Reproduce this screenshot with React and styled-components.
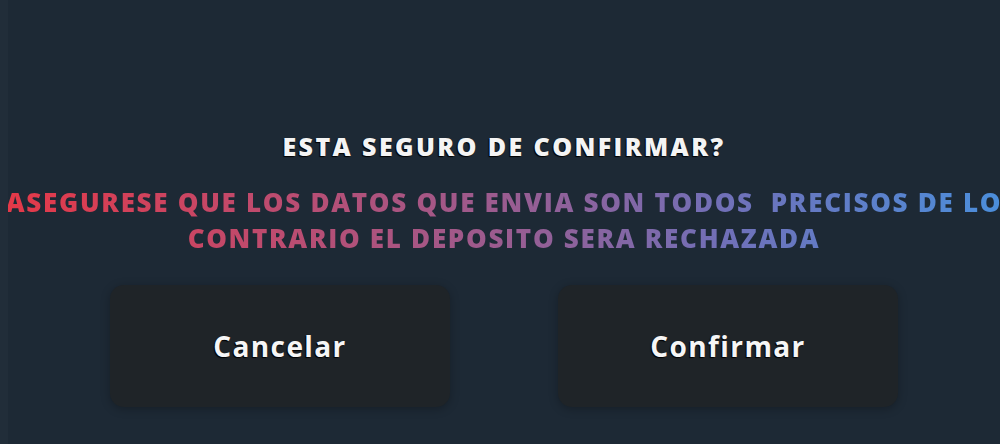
import React from 'react';
import styled, { createGlobalStyle } from 'styled-components';

const GlobalStyle = createGlobalStyle`
  html, body {
    margin: 0;
    padding: 0;
    background: #1d2935;
  }
  body {
    font-family: 'Open Sans', 'Lato', sans-serif;
    overflow: hidden;
  }
`;

const Screen = styled.div`
  width: 1000px;
  height: 444px;
  background: #1d2935;
  border-left: 8px solid #212d39;
  box-sizing: border-box;
  display: flex;
  flex-direction: column;
  align-items: center;
  overflow: hidden;
`;

const Title = styled.h2`
  margin: 130px 0 0 0;
  font-size: 25px;
  font-weight: 800;
  color: #f4f4f4;
  letter-spacing: 2.4px;
  text-shadow: -1px 1px 1px #000;
  line-height: 32px;
`;

const Message = styled.p`
  margin: 22px 0 0 0;
  width: 1010px;
  flex-shrink: 0;
  text-align: center;
  font-size: 26px;
  font-weight: 800;
  letter-spacing: 1.7px;
  line-height: 36px;
  white-space: nowrap;
  background: linear-gradient(90deg, #e63847 0%, #c04a6c 25%, #9a5c90 50%, #7070b8 72%, #4a8fdc 100%);
  -webkit-background-clip: text;
  background-clip: text;
  color: transparent;
`;

const Actions = styled.div`
  display: flex;
  gap: 108px;
  margin-top: 29px;
`;

const Button = styled.button`
  width: 340px;
  height: 122px;
  border: none;
  border-radius: 14px;
  background: #1f2428;
  box-shadow: 0 2px 10px rgba(0, 0, 0, 0.25);
  color: #f6f6f6;
  font-family: 'Open Sans', 'Lato', sans-serif;
  font-size: 28px;
  font-weight: 700;
  letter-spacing: 1.4px;
  text-shadow: -1px 1px 1px #000;
  cursor: pointer;
`;

export default function App() {
  return (
    <Screen>
      <GlobalStyle />
      <Title>ESTA SEGURO DE CONFIRMAR?</Title>
      <Message>
        ASEGURESE QUE LOS DATOS QUE ENVIA SON TODOS&nbsp; PRECISOS DE LO
        <br />
        CONTRARIO EL DEPOSITO SERA RECHAZADA
      </Message>
      <Actions>
        <Button>Cancelar</Button>
        <Button>Confirmar</Button>
      </Actions>
    </Screen>
  );
}
